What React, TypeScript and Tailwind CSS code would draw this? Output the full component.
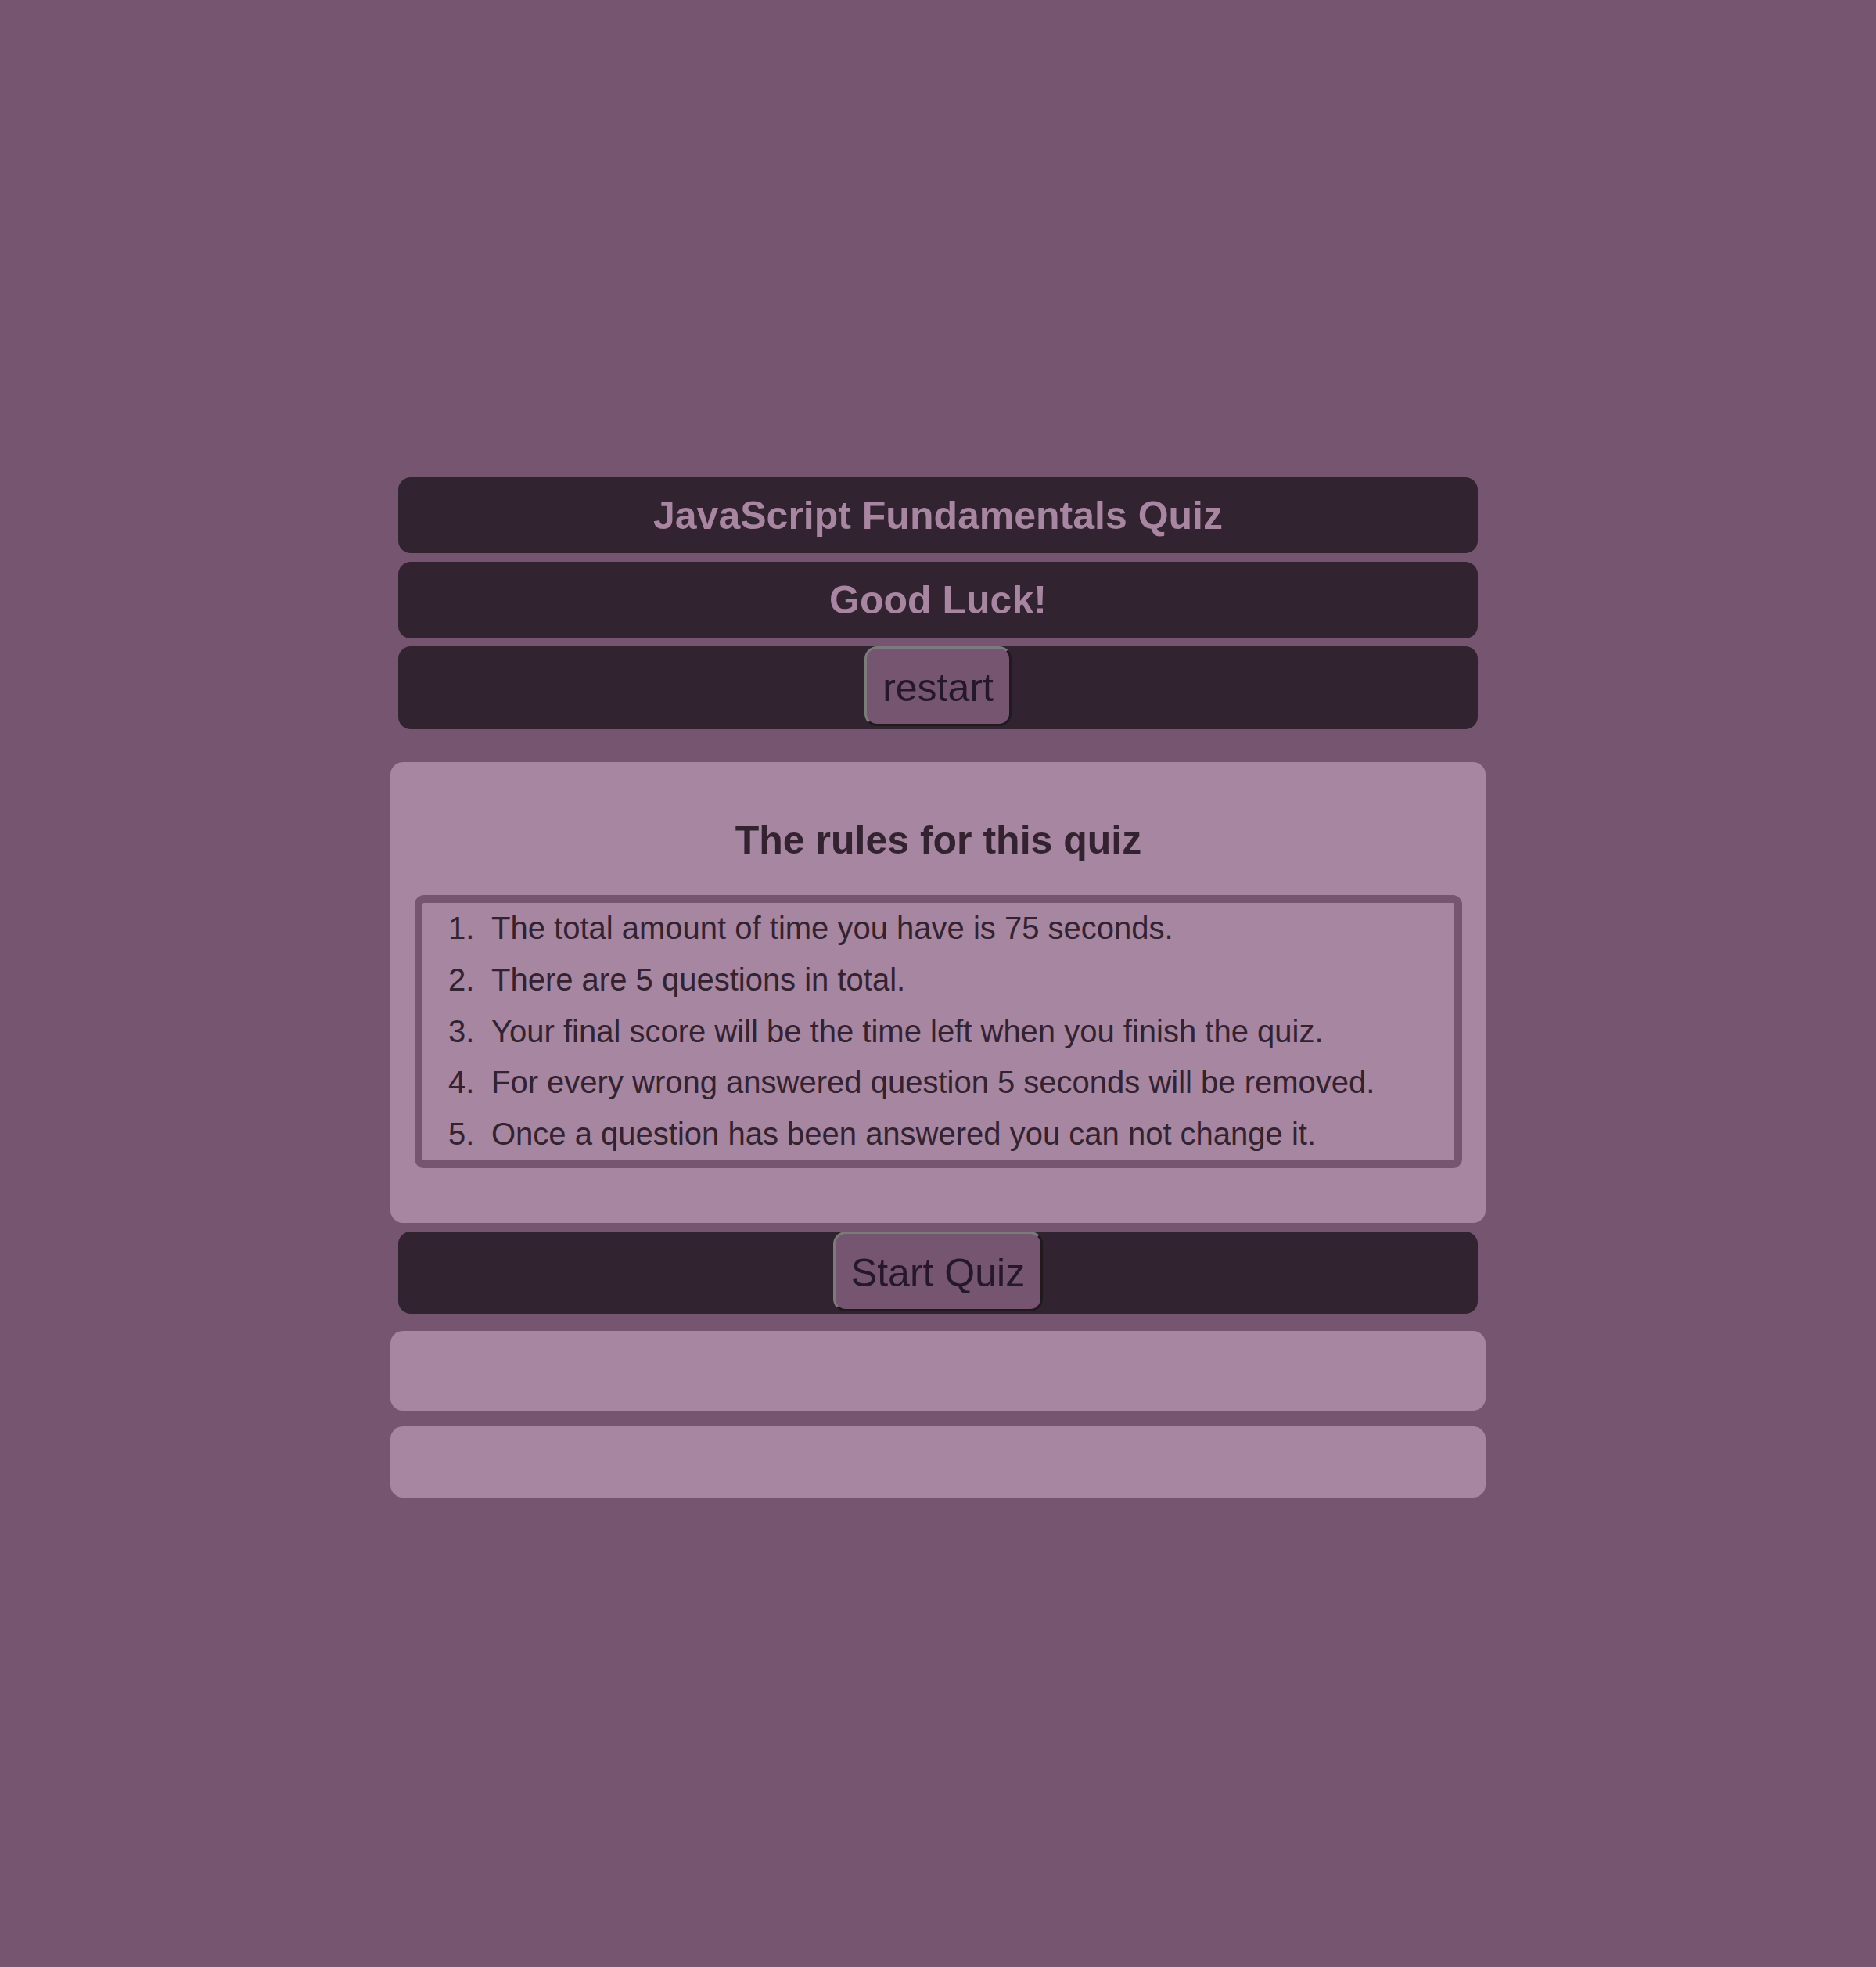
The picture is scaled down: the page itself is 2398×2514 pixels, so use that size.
const rules = [
  'The total amount of time you have is 75 seconds.',
  'There are 5 questions in total.',
  'Your final score will be the time left when you finish the quiz.',
  'For every wrong answered question 5 seconds will be removed.',
  'Once a question has been answered you can not change it.',
];

function QuizButton({ label }: { label: string }) {
  return (
    <button
      type="button"
      className="h-[102px] px-[20px] pt-[4px] rounded-[16px] border-[3px] border-solid border-t-[#7b7b7b] border-l-[#7b7b7b] border-r-[#1e1a1e] border-b-[#1e1a1e] bg-[#75556f] text-[50px] leading-none text-[#24182a]"
    >
      {label}
    </button>
  );
}

export default function App() {
  return (
    <div className="min-h-[2514px] bg-[#75556f] pt-[610px] font-['Liberation_Sans',Arial,sans-serif]">
      <main className="mx-auto flex w-[1400px] flex-col">
        {/* header */}
        <header className="mx-[10px] flex flex-col">
          <div className="flex h-[97px] items-center justify-center rounded-[16px] bg-[#322331]">
            <h1 className="text-[50px] font-bold leading-none text-[#a886a2]">JavaScript Fundamentals Quiz</h1>
          </div>
          <div className="mt-[11px] flex h-[98px] items-center justify-center rounded-[16px] bg-[#322331]">
            <h2 className="text-[50px] font-bold leading-none text-[#a886a2]">Good Luck!</h2>
          </div>
          <div className="mt-[10px] flex justify-center rounded-[16px] bg-[#322331] pb-[4px]">
            <QuizButton label="restart" />
          </div>
        </header>

        {/* rules */}
        <section className="mt-[42px] rounded-[16px] bg-[#a686a0] pt-[71px] pb-[70px] pl-[31px] pr-[30px]">
          <h2 className="text-center text-[50px] font-bold leading-[58px] text-[#33222f]">The rules for this quiz</h2>
          <ol className="mt-[41px] rounded-[12px] border-[10px] border-[#75556f] pl-[33px] text-[40px] leading-[65.8px] text-[#33222f]">
            {rules.map((rule, i) => (
              <li key={i} className="flex">
                <span className="w-[55px] shrink-0">{i + 1}.</span>
                <span>{rule}</span>
              </li>
            ))}
          </ol>
        </section>

        <div className="mx-[10px] mt-[11px] flex justify-center rounded-[16px] bg-[#322331] pb-[3px]">
          <QuizButton label="Start Quiz" />
        </div>

        {/* question + result areas, empty before start */}
        <div className="mt-[22px] h-[102px] rounded-[16px] bg-[#a686a0]" />
        <div className="mt-[20px] h-[91px] rounded-[16px] bg-[#a686a0]" />
      </main>
    </div>
  );
}
